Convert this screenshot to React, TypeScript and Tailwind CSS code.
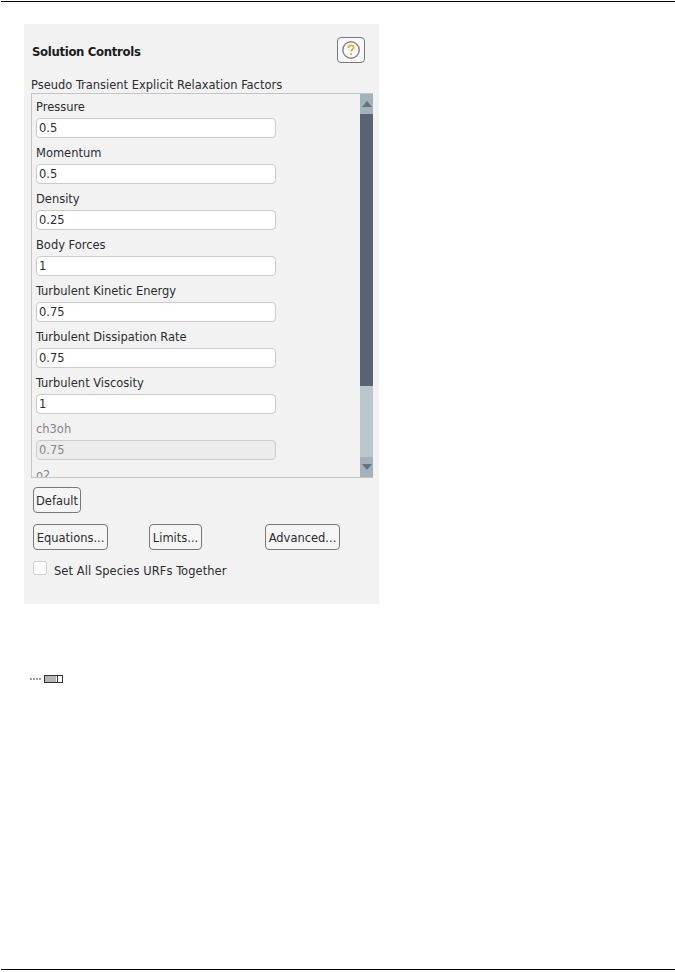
const fields = [
  { label: 'Pressure', value: '0.5' },
  { label: 'Momentum', value: '0.5' },
  { label: 'Density', value: '0.25' },
  { label: 'Body Forces', value: '1' },
  { label: 'Turbulent Kinetic Energy', value: '0.75' },
  { label: 'Turbulent Dissipation Rate', value: '0.75' },
  { label: 'Turbulent Viscosity', value: '1' },
  { label: 'ch3oh', value: '0.75', disabled: true },
];

function PanelButton({ children, className = '' }: { children: string; className?: string }) {
  return (
    <button className={`h-[26px] pt-px rounded-[4px] border border-[#77777c] bg-[#f5f5f5] text-[12.75px] text-[#2c2c30] ${className}`}>
      {children}
    </button>
  );
}

export default function App() {
  return (
    <div className="h-[972px] bg-white flex flex-col font-['DejaVu_Sans_Condensed','DejaVu_Sans',sans-serif] overflow-hidden">
      <div className="mt-px ml-px h-px bg-black shrink-0" />
      <div className="mt-[22px] ml-6 w-[355px] h-[580px] bg-[#f2f2f2] shrink-0 flex flex-col pl-[7px] pr-[6px]">
        <div className="mt-[13px] h-[25px] flex items-center justify-between pr-[8px]">
          <span className="pt-[5px] pl-px text-[13px] font-bold text-[#1c1c20] tracking-[-0.33px]">Solution Controls</span>
          <div className="w-[28px] h-[26px] rounded-[4px] border border-[#77777c] bg-[#f8f8f8] flex items-center justify-center">
            <svg width="20" height="20" viewBox="0 0 20 20">
              <circle cx="10" cy="10" r="8.2" fill="#fbfbfb" stroke="#8a8a8a" strokeWidth="1.5" />
              <path d="M7.4 8c0-1.6 1.2-2.6 2.7-2.6s2.6.9 2.6 2.2c0 1.9-2.6 1.9-2.6 3.8" fill="none" stroke="#e8a82e" strokeWidth="1.8" />
              <circle cx="10.1" cy="14" r="1.1" fill="#e8a82e" />
            </svg>
          </div>
        </div>
        <div className="mt-[15px] h-[16px] leading-[16px] text-[12.75px] text-[#2c2c30] whitespace-nowrap">
          Pseudo Transient Explicit Relaxation Factors
        </div>
        <div className="h-[385px] border border-[#c4c4c4] border-r-0 flex overflow-hidden">
          <div className="flex-1 overflow-hidden pl-[4px] pt-[4px] flex flex-col">
            {fields.map((f) => (
              <div key={f.label} className="h-[46px] shrink-0">
                <div className={`h-[20px] leading-[18px] text-[12.75px] ${f.disabled ? 'text-[#85858a]' : 'text-[#2c2c30]'}`}>{f.label}</div>
                <div className={`w-[240px] h-[20px] rounded-[4px] border border-[#cbcbcb] px-[2px] leading-[17px] text-[12.75px] ${f.disabled ? 'bg-[#ececec] text-[#85858a]' : 'bg-white text-[#2c2c30]'}`}>
                  {f.value}
                </div>
              </div>
            ))}
            <div className="h-[20px] leading-[18px] text-[12.75px] text-[#85858a]">o2</div>
          </div>
          <div className="w-[13px] shrink-0 flex flex-col bg-[#b9c6cc]">
            <div className="h-[20px] bg-[#a3b2ba] flex items-center justify-center">
              <svg width="10" height="6" viewBox="0 0 10 6"><path d="M5 0l5 6H0z" fill="#66727c" /></svg>
            </div>
            <div className="h-[272px] bg-[#5a6274]" />
            <div className="flex-1" />
            <div className="h-[20px] bg-[#a3b2ba] flex items-center justify-center">
              <svg width="10" height="6" viewBox="0 0 10 6"><path d="M5 6L0 0h10z" fill="#66727c" /></svg>
            </div>
          </div>
        </div>
        <div className="mt-[9px] pl-[2px]">
          <PanelButton className="w-[48px]">Default</PanelButton>
        </div>
        <div className="mt-[11px] pl-[2px] flex gap-[41px] h-[26px]">
          <PanelButton className="w-[75px]">Equations...</PanelButton>
          <PanelButton className="w-[53px] mr-[22px]">Limits...</PanelButton>
          <PanelButton className="w-[75px]">Advanced...</PanelButton>
        </div>
        <div className="mt-[11px] pl-[2px] flex items-start gap-[7px] h-[20px]">
          <div className="w-[14px] h-[14px] rounded-[2px] border border-[#cfcfcf] bg-white" />
          <span className="text-[12.75px] leading-[20px] tracking-[0.07px] text-[#2c2c30]">Set All Species URFs Together</span>
        </div>
      </div>
      <div className="mt-[71px] ml-[30px] flex items-start gap-[3px] h-[8px] shrink-0">
        <div className="mt-[3px] w-[11px] h-[2px] bg-[repeating-linear-gradient(90deg,#a0a0a0_0,#a0a0a0_2px,#fff_2px,#fff_3px)]" />
        <div className="w-[19px] h-[8px] border border-[#333] bg-white flex">
          <div className="w-[11px] h-full bg-[#b5b5b5]" />
          <div className="ml-px w-px h-full bg-[#333]" />
        </div>
      </div>
      <div className="mt-auto mb-[2px] ml-px h-px bg-black shrink-0" />
    </div>
  );
}
